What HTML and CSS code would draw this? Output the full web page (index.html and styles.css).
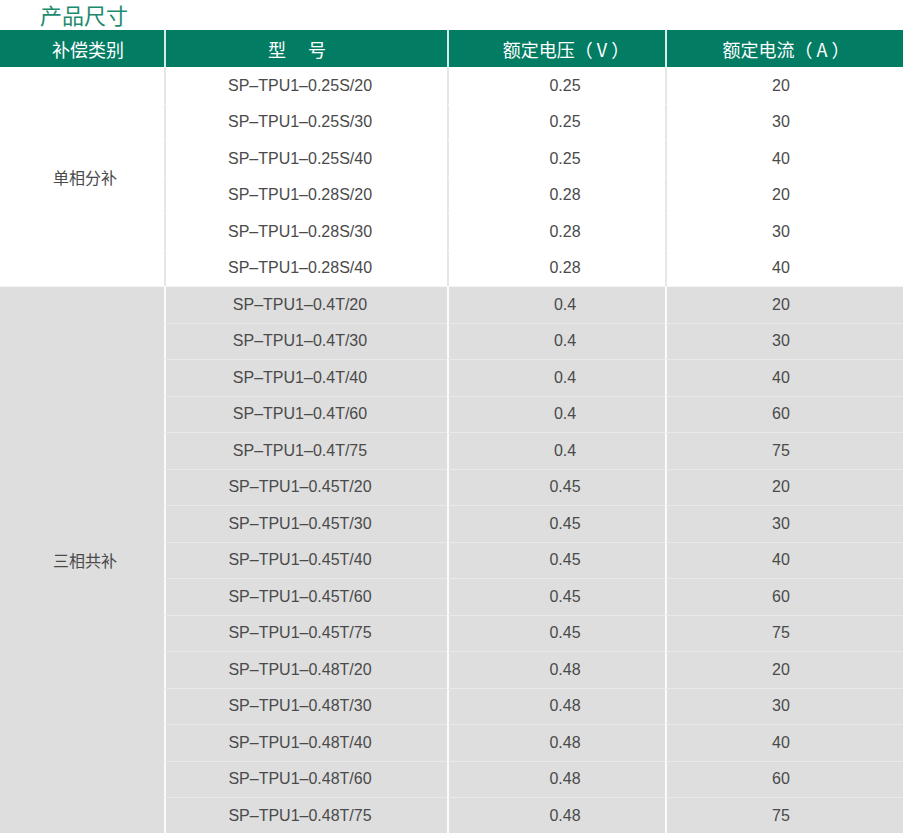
FILE: index.html
```html
<!DOCTYPE html>
<html lang="zh">
<head>
<meta charset="utf-8">
<title>产品尺寸</title>
<link rel="stylesheet" href="styles.css">
</head>
<body>
<h2 class="title">产品尺寸</h2>
<table class="spec">
  <colgroup>
    <col class="c1"><col class="c2"><col class="c3"><col class="c4">
  </colgroup>
  <thead>
    <tr><th>补偿类别</th><th>型　&nbsp;号</th><th>额定电压（&nbsp;V&nbsp;）</th><th>额定电流（&nbsp;A&nbsp;）</th></tr>
  </thead>
  <tbody class="single">
    <tr><td class="cat" rowspan="6">单相分补</td><td>SP–TPU1–0.25S/20</td><td>0.25</td><td>20</td></tr>
    <tr><td>SP–TPU1–0.25S/30</td><td>0.25</td><td>30</td></tr>
    <tr><td>SP–TPU1–0.25S/40</td><td>0.25</td><td>40</td></tr>
    <tr><td>SP–TPU1–0.28S/20</td><td>0.28</td><td>20</td></tr>
    <tr><td>SP–TPU1–0.28S/30</td><td>0.28</td><td>30</td></tr>
    <tr><td>SP–TPU1–0.28S/40</td><td>0.28</td><td>40</td></tr>
  </tbody>
  <tbody class="three">
    <tr><td class="cat" rowspan="15">三相共补</td><td>SP–TPU1–0.4T/20</td><td>0.4</td><td>20</td></tr>
    <tr><td>SP–TPU1–0.4T/30</td><td>0.4</td><td>30</td></tr>
    <tr><td>SP–TPU1–0.4T/40</td><td>0.4</td><td>40</td></tr>
    <tr><td>SP–TPU1–0.4T/60</td><td>0.4</td><td>60</td></tr>
    <tr><td>SP–TPU1–0.4T/75</td><td>0.4</td><td>75</td></tr>
    <tr><td>SP–TPU1–0.45T/20</td><td>0.45</td><td>20</td></tr>
    <tr><td>SP–TPU1–0.45T/30</td><td>0.45</td><td>30</td></tr>
    <tr><td>SP–TPU1–0.45T/40</td><td>0.45</td><td>40</td></tr>
    <tr><td>SP–TPU1–0.45T/60</td><td>0.45</td><td>60</td></tr>
    <tr><td>SP–TPU1–0.45T/75</td><td>0.45</td><td>75</td></tr>
    <tr><td>SP–TPU1–0.48T/20</td><td>0.48</td><td>20</td></tr>
    <tr><td>SP–TPU1–0.48T/30</td><td>0.48</td><td>30</td></tr>
    <tr><td>SP–TPU1–0.48T/40</td><td>0.48</td><td>40</td></tr>
    <tr><td>SP–TPU1–0.48T/60</td><td>0.48</td><td>60</td></tr>
    <tr><td>SP–TPU1–0.48T/75</td><td>0.48</td><td>75</td></tr>
  </tbody>
</table>
</body>
</html>
```
FILE: styles.css
```css
html, body {
  margin: 0;
  padding: 0;
  background: #fff;
}
body {
  font-family: "Liberation Sans", "Noto Sans CJK SC", sans-serif;
  color: #4a4a4a;
}
.title {
  margin: 0;
  height: 30px;
  padding-left: 40px;
  font-family: "Noto Sans CJK SC", sans-serif;
  font-size: 22px;
  font-weight: 400;
  line-height: 29px;
  color: #1e8a6d;
}
.spec {
  width: 903px;
  table-layout: fixed;
  border-collapse: separate;
  border-spacing: 0;
}
.c1 { width: 164px; }
.c2 { width: 283px; }
.c3 { width: 218px; }
.c4 { width: 238px; }
.spec th {
  height: 37px;
  padding: 0;
  background: #037c64;
  color: #fff;
  font-family: "Noto Sans CJK SC", sans-serif;
  font-size: 18px;
  font-weight: 400;
  text-align: center;
  vertical-align: middle;
  border-left: 2px solid #d6ebe5;
  white-space: nowrap;
}
.spec th:nth-child(1) { border-left: 0; padding-left: 12px; }
.spec th:nth-child(2) { padding-right: 19px; }
.spec th:nth-child(3) { padding-left: 18px; }
.spec th:nth-child(4) { padding-left: 2px; }
.spec td {
  height: 35.5px;
  padding: 0;
  font-size: 16px;
  text-align: center;
  vertical-align: middle;
  border-left: 2px solid #e6e6e6;
  border-top: 1px solid #fff;
  white-space: nowrap;
}
.spec td.cat {
  border-left: 0;
  padding-left: 6px;
  font-family: "Noto Sans CJK SC", sans-serif;
  font-size: 16px;
}
.spec tr td:nth-last-child(3) { padding-right: 13px; }
.spec tr td:nth-last-child(2) { padding-left: 16px; }
.spec tr td:nth-last-child(1) { padding-right: 8px; }
.single td { background: #fff; }
.three td {
  background: #dedede;
  border-left-color: #fbfbfb;
  border-top-color: #e9e9e9;
}
.three tr:first-child td { border-top-color: #f4f4f4; }
```
